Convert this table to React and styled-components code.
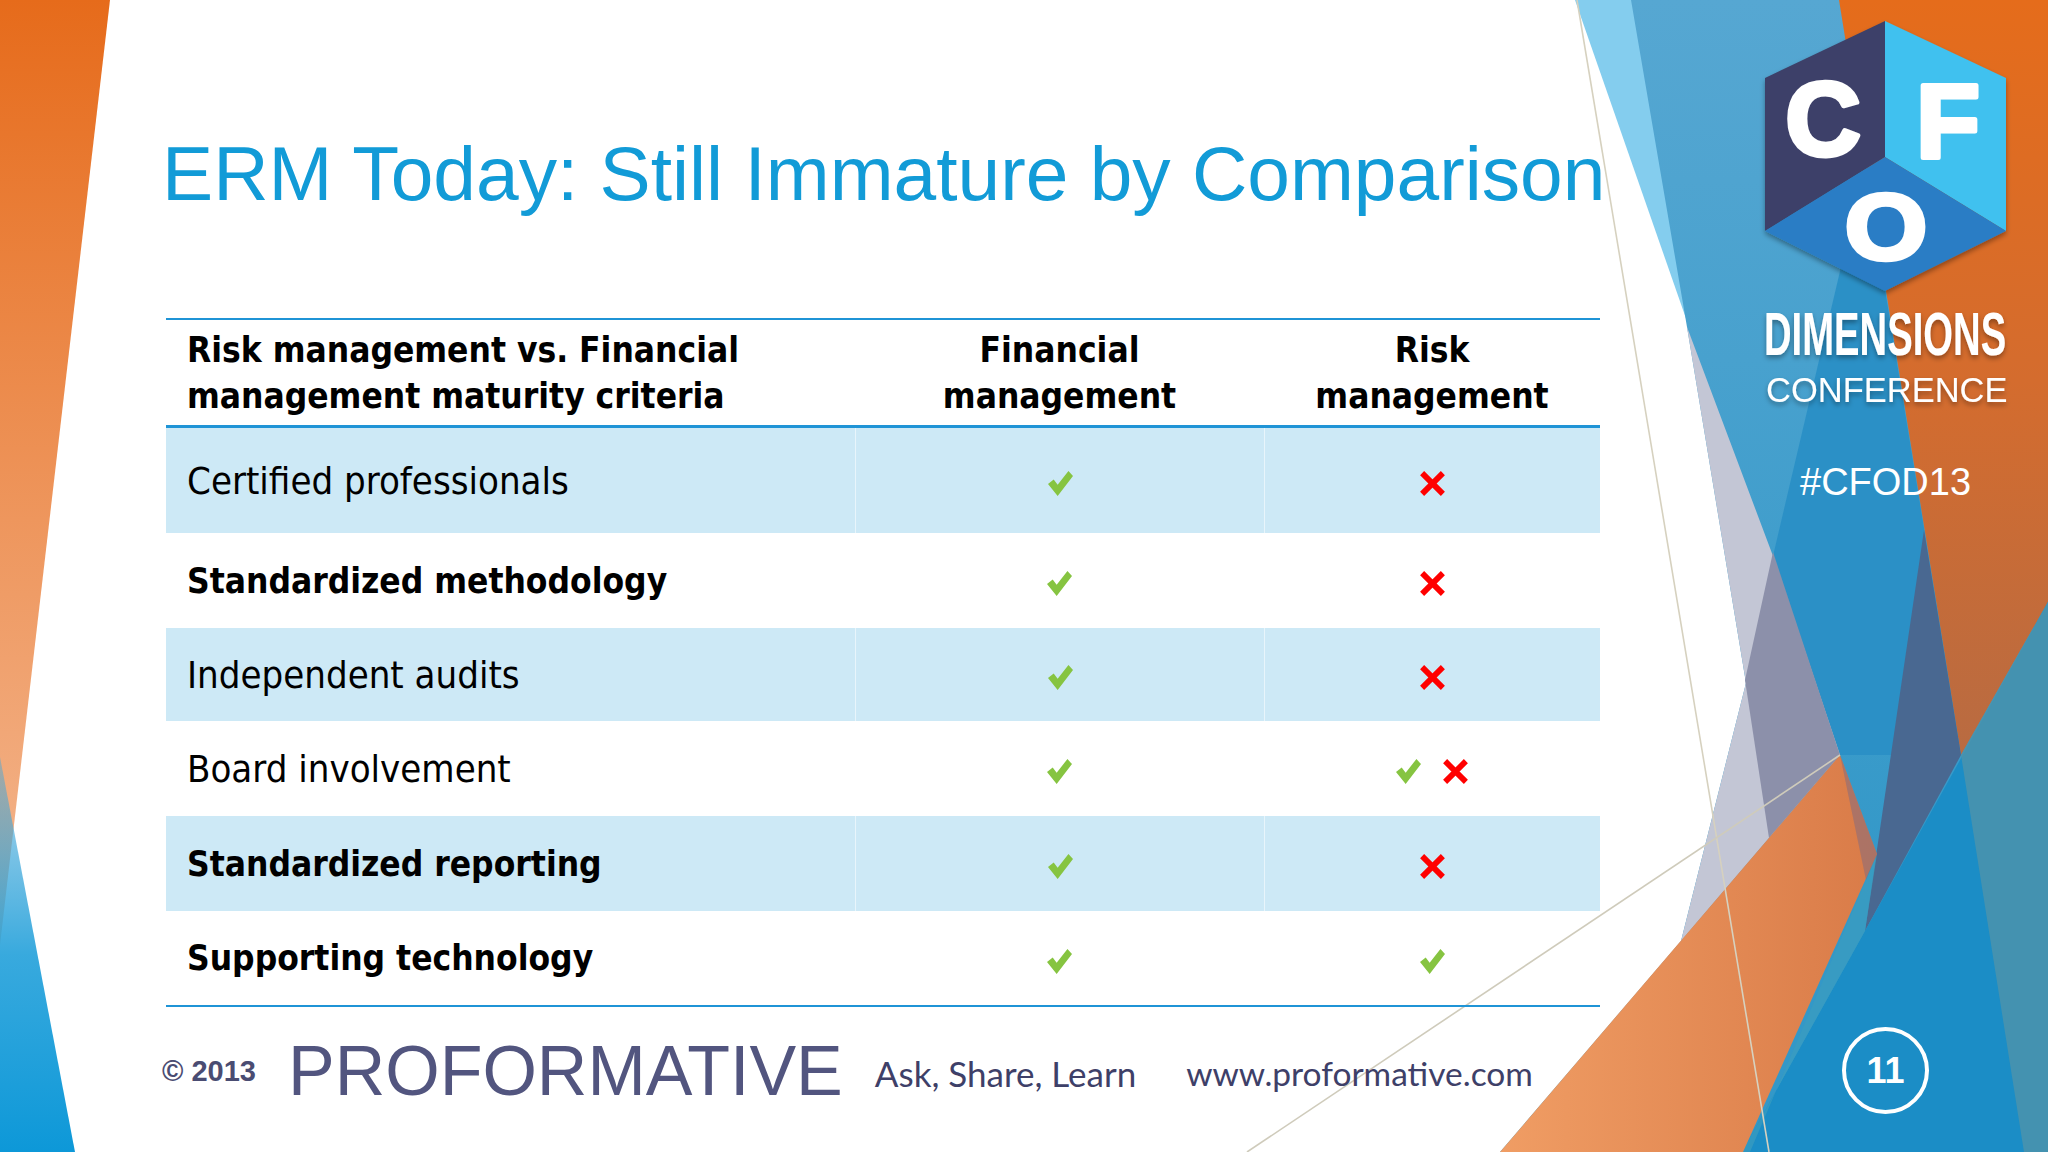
import styled, { createGlobalStyle } from "styled-components"

const Global = createGlobalStyle`
  html, body {
    margin: 0;
    padding: 0;
    background: #ffffff;
  }
  body {
    width: 2048px;
    height: 1152px;
    overflow: hidden;
  }
`

const Slide = styled.div`
  position: relative;
  width: 2048px;
  height: 1152px;
  overflow: hidden;
  background: #ffffff;
  display: flex;
`

const BackSvg = styled.svg`
  position: absolute;
  left: 0;
  top: 0;
  width: 2048px;
  height: 1152px;
`

const Main = styled.main`
  position: relative;
  width: 1762px;
  box-sizing: border-box;
  padding: 135px 0 0 162px;
  display: flex;
  flex-direction: column;
`

const Title = styled.h1`
  margin: 0;
  font-family: "Liberation Sans", Arial, sans-serif;
  font-weight: 400;
  font-size: 76.7px;
  line-height: 77px;
  color: #129bd7;
  white-space: nowrap;
`

const Table = styled.div`
  margin: 106px 0 0 4px;
  width: 1434px;
  border-top: 2px solid #1f94d6;
  border-bottom: 2px solid #1f94d6;
  font-family: "DejaVu Sans Condensed", "DejaVu Sans", sans-serif;
  font-stretch: condensed;
  color: #000;
`

const Row = styled.div`
  display: grid;
  grid-template-columns: 689px 409px 1fr;
  height: ${p => p.$h}px;
  background: ${p => (p.$shaded ? "#cde9f6" : "transparent")};
  border-bottom: ${p => (p.$head ? "3px solid #1f94d6" : "none")};
`

const Cell = styled.div`
  display: flex;
  align-items: center;
  justify-content: flex-start;
  padding-left: 21px;
  font-size: ${p => (p.$bold ? 35 : 38)}px;
  font-weight: ${p => (p.$bold ? 700 : 400)};
  line-height: 46px;
`

const HeadCell = styled(Cell)`
  justify-content: center;
  padding-left: 0;
  text-align: center;
`

const MarkCell = styled.div`
  display: flex;
  align-items: center;
  justify-content: center;
  gap: 21px;
  padding-top: 6px;
  border-left: ${p => (p.$divider ? "1px solid rgba(255,255,255,0.55)" : "none")};
`

const Footer = styled.footer`
  display: flex;
  align-items: center;
  height: 128px;
  color: #4a4c76;
`

const Copy = styled.span`
  font-family: "Liberation Sans", Arial, sans-serif;
  font-weight: 700;
  font-size: 29px;
  color: #4a4c72;
`

const Brand = styled.span`
  margin-left: 32px;
  font-family: "Liberation Sans", Arial, sans-serif;
  font-size: 70px;
  font-weight: 400;
  color: #52557f;
`

const Tagline = styled.span`
  margin-left: ${p => p.$gap}px;
  font-family: Lato, "Open Sans", sans-serif;
  font-size: ${p => p.$size}px;
  color: #3e4068;
  margin-top: 4px;
`

const Side = styled.aside`
  position: relative;
  width: 286px;
  display: flex;
  flex-direction: column;
  align-items: flex-start;
`

const LogoSvg = styled.svg`
  display: block;
  width: 286px;
  height: 520px;
  overflow: visible;
`

const PageNum = styled.div`
  margin: auto 0 38px 80px;
  width: 87px;
  height: 87px;
  box-sizing: border-box;
  border: 4px solid #ffffff;
  border-radius: 50%;
  display: flex;
  align-items: center;
  justify-content: center;
  font-family: "Liberation Sans", Arial, sans-serif;
  font-weight: 700;
  font-size: 36px;
  color: #ffffff;
`

const MarkSvg = styled.svg`
  display: block;
  flex: none;
`

function Check() {
  return (
    <MarkSvg width="25" height="25" viewBox="0 0 22 22">
      <polygon points="0,11.5 5,7.5 8.5,12 18,0 22,4.5 8.5,22" fill="#86c441" />
    </MarkSvg>
  )
}

function Cross() {
  return (
    <MarkSvg width="27" height="27" viewBox="0 0 26 26">
      <path d="M3 3 L23 23 M23 3 L3 23" stroke="#ff0000" strokeWidth="5.5" />
    </MarkSvg>
  )
}

function Marks({ list }) {
  return list.map((m, i) => (m === "x" ? <Cross key={i} /> : <Check key={i} />))
}

function Backdrop() {
  return (
    <BackSvg viewBox="0 0 2048 1152" preserveAspectRatio="none">
      <defs>
        <linearGradient id="orL" x1="0" y1="0" x2="0" y2="945" gradientUnits="userSpaceOnUse">
          <stop offset="0" stopColor="#e66b1b" />
          <stop offset="0.55" stopColor="#ee965d" />
          <stop offset="1" stopColor="#f4b891" />
        </linearGradient>
        <linearGradient id="blL" x1="0" y1="757" x2="0" y2="1152" gradientUnits="userSpaceOnUse">
          <stop offset="0" stopColor="#4aa8d8" stopOpacity="0.45" />
          <stop offset="0.5" stopColor="#22a0da" stopOpacity="0.9" />
          <stop offset="1" stopColor="#0d98d8" />
        </linearGradient>
        <linearGradient id="midB" x1="0" y1="0" x2="0" y2="900" gradientUnits="userSpaceOnUse">
          <stop offset="0" stopColor="#56a7d2" />
          <stop offset="1" stopColor="#3398c8" />
        </linearGradient>
        <linearGradient id="orTR" x1="0" y1="0" x2="0" y2="760" gradientUnits="userSpaceOnUse">
          <stop offset="0" stopColor="#e56c1b" />
          <stop offset="0.5" stopColor="#d46c2e" />
          <stop offset="1" stopColor="#b86b42" />
        </linearGradient>
        <linearGradient id="orBot" x1="1500" y1="0" x2="1880" y2="0" gradientUnits="userSpaceOnUse">
          <stop offset="0" stopColor="#f09d64" />
          <stop offset="1" stopColor="#d97b48" />
        </linearGradient>
      </defs>

      <polygon points="0,0 110,0 0,945" fill="url(#orL)" />
      <polygon points="0,757 75,1152 0,1152" fill="url(#blL)" />

      <polygon points="1575,0 1635,0 1690,330" fill="#84cdee" />
      <polygon
        points="1631,0 2048,0 2048,1152 1500,1152 1681,941 1746,683 1687,327"
        fill="url(#midB)"
      />
      <polygon points="1845,250 1877,240 1961,755 1840,755 1773,556" fill="#2b90c6" />
      <polygon points="1687,327 1773,556 1840,755 1681,941 1746,683" fill="#c3c6d5" />
      <polygon points="1773,552 1840,755 1769,838 1745,680" fill="#8c90aa" />
      <polygon points="1839,0 2048,0 2048,602 1961,755" fill="url(#orTR)" />
      <polygon points="1924,530 1961,755 1865,931" fill="#496891" />
      <polygon points="2048,602 2048,1152 1742,1152" fill="#1b8dc6" />
      <polygon points="1865,931 1877,854 1750,1152 1742,1152" fill="#3a9cbf" opacity="0.7" />
      <polygon points="2048,602 1961,755 2024,1152 2048,1152" fill="#4b93ab" opacity="0.85" />
      <polygon points="1500,1152 1840,755 1877,854 1743,1152" fill="url(#orBot)" />
      <polygon points="1840,755 1877,854 1866,880" fill="#7e6a82" opacity="0.5" />

      <line x1="1577" y1="0" x2="1769" y2="1152" stroke="#d6d1bf" strokeWidth="1.6" />
      <line x1="1247" y1="1152" x2="1840" y2="755" stroke="#cfcbbb" strokeWidth="1.6" />
    </BackSvg>
  )
}

function Logo() {
  return (
    <LogoSvg viewBox="0 0 286 520">
      <defs>
        <filter id="shade" x="-10%" y="-20%" width="120%" height="150%">
          <feDropShadow dx="0" dy="3" stdDeviation="2.5" floodColor="#000" floodOpacity="0.35" />
        </filter>
      </defs>
      <g transform="translate(-1762 0)">
        <g filter="url(#shade)">
          <polygon points="1885,21 1765,78 1765,231 1885,157" fill="#3d4169" />
          <polygon points="1885,21 2006,78 2006,231 1885,157" fill="#3fc1ef" />
          <polygon points="1885,157 1765,231 1885,291 2006,231" fill="#2a7dc5" />
        </g>
        <g
          fill="#ffffff"
          stroke="#ffffff"
          strokeWidth="5"
          strokeLinejoin="round"
          fontFamily="'Liberation Sans', Arial, sans-serif"
          fontWeight="700"
          fontSize="104"
          textAnchor="middle"
        >
          <text x="1823" y="155">C</text>
          <text x="1948" y="157">F</text>
          <text transform="translate(1886 259) scale(1.02 0.9)">O</text>
        </g>
        <g fill="#ffffff" filter="url(#shade)" fontFamily="'Liberation Sans', Arial, sans-serif">
          <text transform="translate(1764 355) scale(0.617 1)" fontSize="62" fontWeight="700">
            DIMENSIONS
          </text>
          <text x="1766" y="402" fontSize="34.5">
            CONFERENCE
          </text>
        </g>
        <text
          x="1800"
          y="495"
          fill="#ffffff"
          fontFamily="'Liberation Sans', Arial, sans-serif"
          fontSize="38"
        >
          #CFOD13
        </text>
      </g>
    </LogoSvg>
  )
}

const rows = [
  { label: "Certified professionals", bold: false, shaded: true, h: 105, fin: ["v"], risk: ["x"] },
  { label: "Standardized methodology", bold: true, shaded: false, h: 95, fin: ["v"], risk: ["x"] },
  { label: "Independent audits", bold: false, shaded: true, h: 93, fin: ["v"], risk: ["x"] },
  { label: "Board involvement", bold: false, shaded: false, h: 95, fin: ["v"], risk: ["v", "x"] },
  { label: "Standardized reporting", bold: true, shaded: true, h: 95, fin: ["v"], risk: ["x"] },
  { label: "Supporting technology", bold: true, shaded: false, h: 94, fin: ["v"], risk: ["v"] },
]

export default function App() {
  return (
    <>
      <Global />
      <Slide>
        <Backdrop />
        <Main>
          <Title>ERM Today: Still Immature by Comparison</Title>
          <Table>
            <Row $h={105} $head>
              <Cell $bold>
                Risk management vs. Financial
                <br />
                management maturity criteria
              </Cell>
              <HeadCell $bold>
                Financial
                <br />
                management
              </HeadCell>
              <HeadCell $bold>
                Risk
                <br />
                management
              </HeadCell>
            </Row>
            {rows.map(r => (
              <Row key={r.label} $h={r.h} $shaded={r.shaded}>
                <Cell $bold={r.bold}>{r.label}</Cell>
                <MarkCell $divider={r.shaded}>
                  <Marks list={r.fin} />
                </MarkCell>
                <MarkCell $divider={r.shaded}>
                  <Marks list={r.risk} />
                </MarkCell>
              </Row>
            ))}
          </Table>
          <Footer>
            <Copy>© 2013</Copy>
            <Brand>PROFORMATIVE</Brand>
            <Tagline $gap={32} $size={35}>Ask, Share, Learn</Tagline>
            <Tagline $gap={50} $size={33.5}>www.proformative.com</Tagline>
          </Footer>
        </Main>
        <Side>
          <Logo />
          <PageNum>11</PageNum>
        </Side>
      </Slide>
    </>
  )
}
